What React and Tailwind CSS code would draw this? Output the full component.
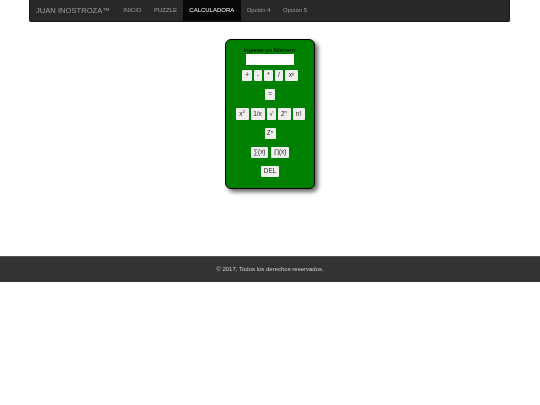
const navLinks = [
  { label: 'INICIO' },
  { label: 'PUZZLE' },
  { label: 'CALCULADORA', active: true },
  { label: 'Opción 4' },
  { label: 'Opción 5' },
];

const Key = ({ children, className = '' }) => (
  <button className={`h-[11px] flex items-center justify-center bg-[#efefef] rounded-[1px] text-[6.4px] leading-none text-[#222] ${className}`}>
    {children}
  </button>
);

const Sup = ({ children }) => <sup className="text-[4.4px] leading-none -top-[1.5px] relative align-baseline">{children}</sup>;

export default function App() {
  return (
    <div className="w-[540px] h-[405px] bg-white overflow-hidden blur-[0.3px] font-['Liberation_Sans',sans-serif]">
      {/* Navbar */}
      <nav className="mx-[29px] w-[481px] h-[22px] flex items-stretch bg-[#282828] rounded-b-[2px] border border-t-0 border-[#181818] pl-[6px]">
        <span className="flex items-center text-[#9d9d9d] text-[7.6px] w-[81px]">JUAN INOSTROZA™</span>
        {navLinks.map((link) => (
          <a
            key={link.label}
            className={`flex items-center px-[6.2px] text-[6px] ${link.active ? 'bg-[#080808] text-white' : 'text-[#9d9d9d]'}`}
          >
            {link.label}
          </a>
        ))}
      </nav>

      {/* Calculadora */}
      <div className="flex justify-center mt-[17px]">
        <div className="w-[90px] h-[150px] bg-[#008000] border border-black rounded-[6px] shadow-[3px_3px_4px_rgba(0,0,0,0.6)] flex flex-col items-center pt-[7px]">
          <label className="text-[6px] leading-[6px] text-black">Ingrese un Número:</label>
          <input className="w-[48px] h-[11px] mt-[1px] bg-white" />
          <div className="flex gap-[2px] mt-[5px]">
            <Key className="w-[10px]">+</Key>
            <Key className="w-[8px]">-</Key>
            <Key className="w-[9px]">*</Key>
            <Key className="w-[8px]">/</Key>
            <Key className="w-[13px]">x<Sup>y</Sup></Key>
          </div>
          <Key className="w-[10px] mt-[8px]">=</Key>
          <div className="flex gap-[2px] mt-[8px]">
            <Key className="w-[13px] h-[12px]">x<Sup>2</Sup></Key>
            <Key className="w-[14px] h-[12px]">1/x</Key>
            <Key className="w-[9px] h-[12px]">√</Key>
            <Key className="w-[13px] h-[12px]">2<Sup>n</Sup></Key>
            <Key className="w-[12px] h-[12px]">n!</Key>
          </div>
          <Key className="w-[11px] mt-[8px]">Z<Sup>n</Sup></Key>
          <div className="flex gap-[3px] mt-[8px]">
            <Key className="w-[17px]">∑(x)</Key>
            <Key className="w-[18px]">∏(x)</Key>
          </div>
          <Key className="w-[18px] mt-[8px]">DEL</Key>
        </div>
      </div>

      {/* Footer */}
      <footer className="mt-[67px] h-[26px] bg-[#333333] border-t border-[#555] flex items-center justify-center text-[6px] text-[#cfcfcf]">
        © 2017, Todos los derechos reservados.
      </footer>
    </div>
  );
}
